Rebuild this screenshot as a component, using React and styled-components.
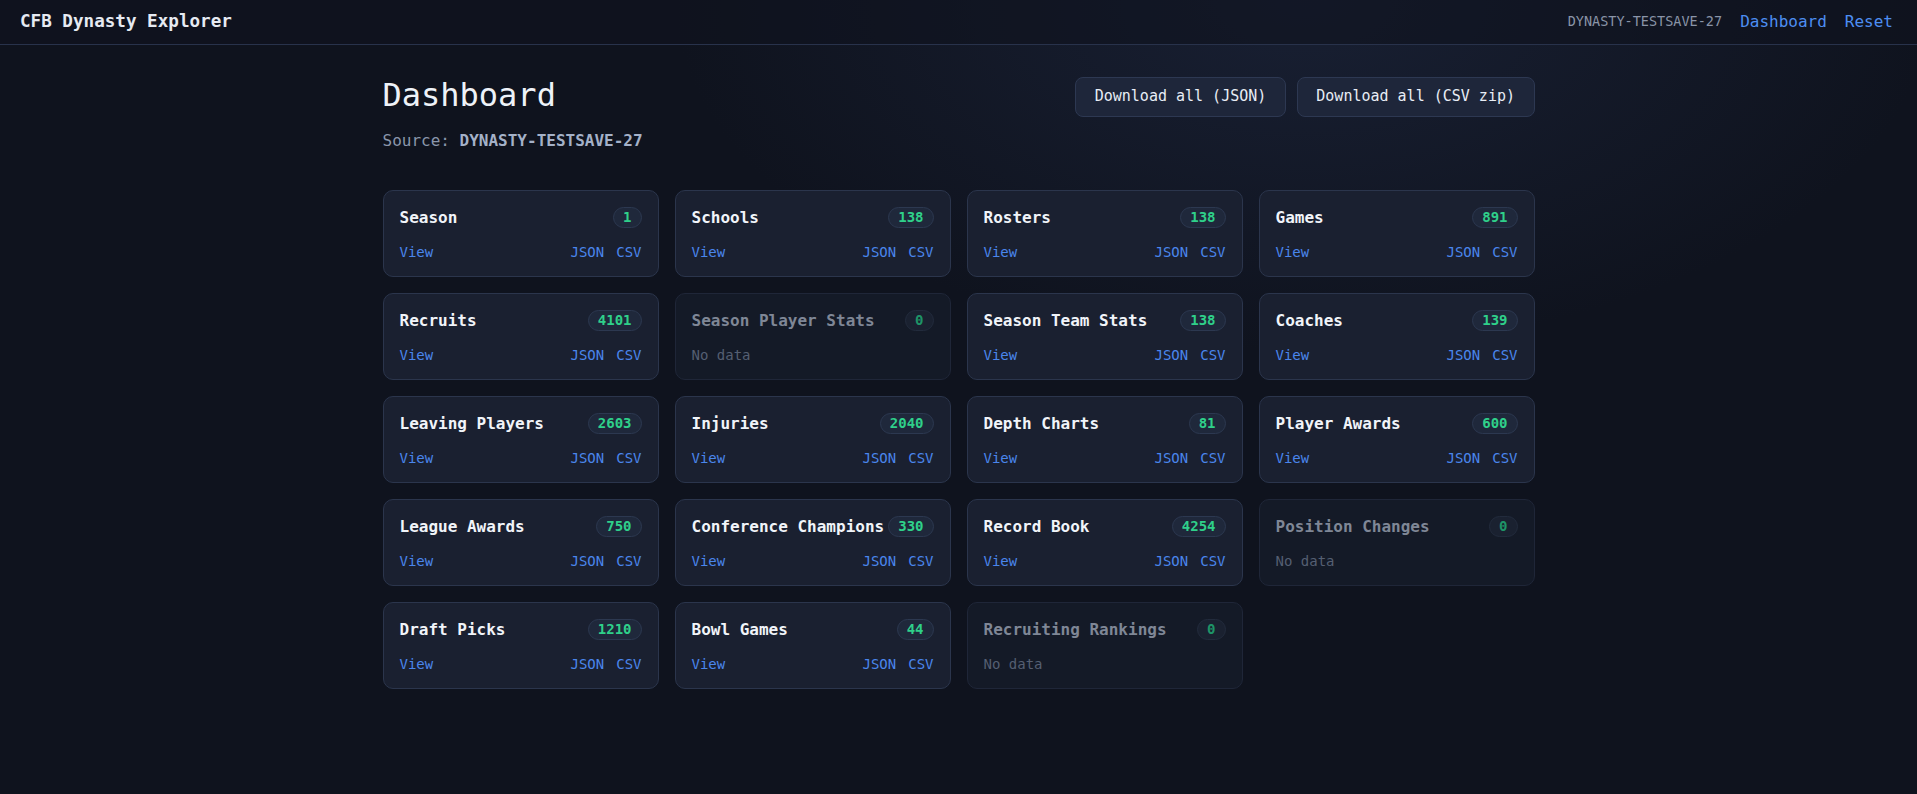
import React from "react";
import styled, { createGlobalStyle } from "styled-components";

const GlobalStyle = createGlobalStyle`
  html, body {
    margin: 0;
    padding: 0;
    min-height: 100%;
  }
  body {
    background-color: #0f131e;
    background-image: radial-gradient(ellipse 900px 500px at 68% 0%, rgba(32, 42, 68, 0.55), rgba(15, 19, 30, 0) 70%);
    background-repeat: no-repeat;
    min-height: 794px;
    color: #e5e9f0;
    font-family: "DejaVu Sans Mono", "Liberation Mono", monospace;
  }
`;

const Header = styled.header`
  height: 44px;
  display: flex;
  align-items: center;
  justify-content: space-between;
  padding: 0 24px 0 20px;
  border-bottom: 1px solid #28324b;
  background: rgba(15, 19, 30, 0.6);
`;

const Brand = styled.div`
  font-size: 17.6px;
  font-weight: 700;
  color: #e6eaf2;
  margin-top: -2px;
`;

const Nav = styled.nav`
  display: flex;
  align-items: center;
  gap: 18px;
  margin-top: -2px;
`;

const SaveName = styled.span`
  font-size: 13.5px;
  color: #8a94a8;
`;

const NavLink = styled.a`
  font-size: 16px;
  color: #4d8ef2;
  text-decoration: none;
`;

const Main = styled.main`
  max-width: 1200px;
  margin: 0 auto;
  padding: 32px 24px;
  box-sizing: border-box;
`;

const TopRow = styled.div`
  display: flex;
  justify-content: space-between;
  align-items: flex-start;
  margin-bottom: 40px;
`;

const Title = styled.h1`
  margin: 0;
  font-size: 32px;
  font-weight: 400;
  color: #eef2f8;
  line-height: 37px;
`;

const Source = styled.div`
  margin-top: 17px;
  font-size: 16px;
  color: #8a96ab;
  line-height: 19px;
`;

const SourceName = styled.b`
  color: #a4b1c8;
  font-weight: 700;
`;

const Actions = styled.div`
  display: flex;
  gap: 11px;
`;

const Button = styled.button`
  font-family: inherit;
  font-size: 15px;
  color: #e8edf5;
  background: #1e263a;
  border: 1px solid #2d3852;
  border-radius: 8px;
  padding: 10px 18.5px;
  line-height: 17.5px;
  cursor: pointer;
`;

const Grid = styled.div`
  display: grid;
  grid-template-columns: repeat(4, 1fr);
  gap: 16px;
`;

const Card = styled.div`
  border: 1px solid ${(p) => (p.$empty ? "#1f2638" : "#2b354c")};
  background: ${(p) => (p.$empty ? "#141a27" : "#1a2030")};
  border-radius: 10px;
  padding: 16px;
  display: flex;
  flex-direction: column;
  gap: 16px;
`;

const CardHead = styled.div`
  display: flex;
  align-items: center;
  justify-content: space-between;
  gap: 4px;
`;

const CardTitle = styled.div`
  font-size: 16px;
  font-weight: 700;
  color: ${(p) => (p.$empty ? "#7f8796" : "#f1f4f9")};
  white-space: nowrap;
`;

const Badge = styled.span`
  font-size: 14px;
  font-weight: 700;
  line-height: 15px;
  padding: 2px 9px;
  border-radius: 999px;
  border: 1px solid ${(p) => (p.$empty ? "#222b3c" : "#2c3850")};
  background: ${(p) => (p.$empty ? "#1a2130" : "#1f283b")};
  color: ${(p) => (p.$empty ? "#1e9467" : "#2fd08a")};
`;

const CardLinks = styled.div`
  display: flex;
  justify-content: space-between;
  align-items: center;
  font-size: 14px;
  line-height: 16px;
`;

const LinkGroup = styled.div`
  display: flex;
  gap: 12px;
`;

const CardLink = styled.a`
  color: #4a86ec;
  text-decoration: none;
`;

const NoData = styled.span`
  color: #555f72;
`;

const tables = [
  ["Season", 1],
  ["Schools", 138],
  ["Rosters", 138],
  ["Games", 891],
  ["Recruits", 4101],
  ["Season Player Stats", 0],
  ["Season Team Stats", 138],
  ["Coaches", 139],
  ["Leaving Players", 2603],
  ["Injuries", 2040],
  ["Depth Charts", 81],
  ["Player Awards", 600],
  ["League Awards", 750],
  ["Conference Champions", 330],
  ["Record Book", 4254],
  ["Position Changes", 0],
  ["Draft Picks", 1210],
  ["Bowl Games", 44],
  ["Recruiting Rankings", 0],
];

function TableCard({ name, count }) {
  const empty = count === 0;
  return (
    <Card $empty={empty}>
      <CardHead>
        <CardTitle $empty={empty}>{name}</CardTitle>
        <Badge $empty={empty}>{count}</Badge>
      </CardHead>
      <CardLinks>
        {empty ? (
          <NoData>No data</NoData>
        ) : (
          <>
            <CardLink href="#">View</CardLink>
            <LinkGroup>
              <CardLink href="#">JSON</CardLink>
              <CardLink href="#">CSV</CardLink>
            </LinkGroup>
          </>
        )}
      </CardLinks>
    </Card>
  );
}

export default function App() {
  return (
    <>
      <GlobalStyle />
      <Header>
        <Brand>CFB Dynasty Explorer</Brand>
        <Nav>
          <SaveName>DYNASTY-TESTSAVE-27</SaveName>
          <NavLink href="#">Dashboard</NavLink>
          <NavLink href="#">Reset</NavLink>
        </Nav>
      </Header>
      <Main>
        <TopRow>
          <div>
            <Title>Dashboard</Title>
            <Source>
              Source: <SourceName>DYNASTY-TESTSAVE-27</SourceName>
            </Source>
          </div>
          <Actions>
            <Button>Download all (JSON)</Button>
            <Button>Download all (CSV zip)</Button>
          </Actions>
        </TopRow>
        <Grid>
          {tables.map(([name, count]) => (
            <TableCard key={name} name={name} count={count} />
          ))}
        </Grid>
      </Main>
    </>
  );
}
